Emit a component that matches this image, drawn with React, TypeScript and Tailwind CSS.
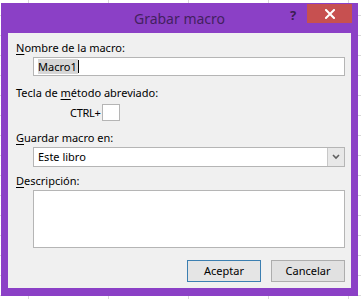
import React from "react";

export default function App() {
  return (
    <div
      className="relative w-[361px] h-[299px] overflow-hidden bg-white bg-[linear-gradient(to_right,#d9d9d9_1px,transparent_1px),linear-gradient(to_bottom,#d9d9d9_1px,transparent_1px)] bg-[size:80px_20px] bg-[position:28px_15px] pt-[3px] pl-[1px] font-['Noto_Sans',sans-serif]"
    >
      <div className="w-[357px] h-[293px] bg-[#8b40c6] flex flex-col">
        <div className="relative h-[30px] flex items-center justify-center">
          <span className="text-[14px] text-[#43205f] leading-none mt-[1px]">Grabar macro</span>
          <span className="absolute left-[289px] top-[6px] text-[13px] font-bold text-[#3a1d52] leading-none">?</span>
          <div className="absolute left-[306px] top-[1px] w-[45px] h-[19px] bg-[#c75050] flex items-center justify-center">
            <svg width="10" height="10" viewBox="0 0 10 10">
              <path d="M1 1 L9 9 M9 1 L1 9" stroke="white" strokeWidth="2" strokeLinecap="square" />
            </svg>
          </div>
        </div>
        <div className="ml-[7px] w-[343px] h-[255px] bg-[#f0f0f0] flex flex-col text-[11px] text-black leading-[16px]">
          <div className="pl-[8px] mt-[7px]">
            <span className="underline underline-offset-2">N</span>ombre de la macro:
          </div>
          <div className="ml-[25px] mr-[6px] mt-[1px] h-[19px] border border-[#b5b5b5] bg-white flex items-center pl-[4px]">
            <span className="bg-[#d6d6d6] leading-[15px] pr-[1px]">Macro1</span>
            <span className="w-px h-[13px] bg-black" />
          </div>
          <div className="pl-[8px] mt-[9px]">
            Tecla de <span className="underline underline-offset-2">m</span>étodo abreviado:
          </div>
          <div className="flex items-center mt-[3px] pl-[62px]">
            <span className="tracking-[-0.3px]">CTRL+</span>
            <div className="ml-[2px] w-[18px] h-[17px] border border-[#b5b5b5] bg-white" />
          </div>
          <div className="pl-[8px] mt-[9px]">
            <span className="underline underline-offset-2">G</span>uardar macro en:
          </div>
          <div className="ml-[25px] mr-[6px] mt-[1px] h-[20px] border border-[#b5b5b5] bg-white flex items-center">
            <span className="pl-[4px] flex-1">Este libro</span>
            <div className="w-[17px] h-full bg-[#e8e8e8] border-l border-[#c8c8c8] flex items-center justify-center">
              <svg width="8" height="6" viewBox="0 0 8 6">
                <path d="M1 1 L4 4 L7 1" stroke="#606060" strokeWidth="1.6" fill="none" />
              </svg>
            </div>
          </div>
          <div className="pl-[8px] mt-[6px]">
            <span className="underline underline-offset-2">D</span>escripción:
          </div>
          <div className="ml-[25px] mr-[6px] mt-[1px] h-[58px] border border-[#b5b5b5] bg-white" />
          <div className="flex justify-end gap-[10px] mr-[6px] mt-[12px]">
            <button className="w-[74px] h-[22px] border border-[#3c7fb1] bg-[#e5e5e5] text-[11px]">Aceptar</button>
            <button className="w-[74px] h-[22px] border border-[#adadad] bg-[#e1e1e1] text-[11px]">Cancelar</button>
          </div>
        </div>
      </div>
    </div>
  );
}
